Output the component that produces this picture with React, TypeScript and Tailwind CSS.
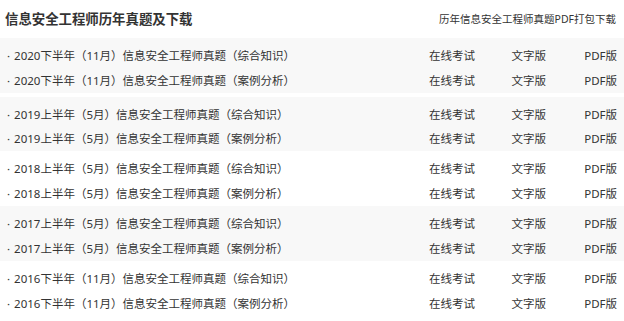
const groups = [
  { year: "2020下半年（11月）", h: "h-[55px]", bg: "bg-[#f8f8f8]" },
  { year: "2019上半年（5月）", h: "h-[54px]", bg: "bg-[#f8f8f8]" },
  { year: "2018上半年（5月）", h: "h-[55px]", bg: "bg-white" },
  { year: "2017上半年（5月）", h: "h-[55px]", bg: "bg-[#f8f8f8]" },
  { year: "2016下半年（11月）", h: "h-[55px]", bg: "bg-white" },
];

const kinds = ["（综合知识）", "（案例分析）"];

export default function App() {
  return (
    <div
      className="w-[624px] h-[321px] bg-white text-[#333] overflow-hidden"
      style={{ fontFamily: '"Noto Sans", "Noto Sans CJK SC", sans-serif' }}
    >
      <div className="h-[38px] flex items-center justify-between pl-[5px] pr-[8px]">
        <div className="text-[13.4px] font-bold text-[#333] leading-none pt-[2px]">信息安全工程师历年真题及下载</div>
        <div className="text-[10.5px] text-[#333] leading-none pt-[1px]">历年信息安全工程师真题PDF打包下载</div>
      </div>
      {groups.map((g, gi) => (
        <div key={gi} className={`${g.h} ${g.bg} ${gi === 1 ? "mt-[4px]" : ""} pt-[5px] flex flex-col`}>
          {kinds.map((k) => (
            <div key={k} className="h-[25px] flex items-center text-[11.5px] leading-none">
              <div className="flex-1 pl-[7px] whitespace-nowrap">
                ·<span className="ml-[4px]">{g.year}信息安全工程师真题{k}</span>
              </div>
              <div className="w-[71px] text-right">在线考试</div>
              <div className="w-[71px] text-right">文字版</div>
              <div className="w-[71px] text-right pr-[7px] box-content">PDF版</div>
            </div>
          ))}
        </div>
      ))}
    </div>
  );
}
